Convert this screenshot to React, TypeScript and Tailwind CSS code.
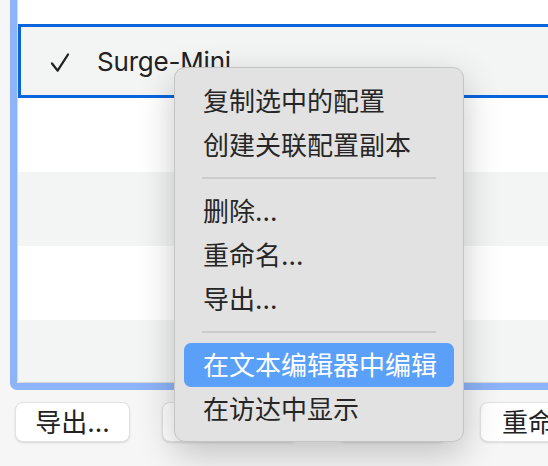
import React from "react";

const font = "font-['Inter','Noto_Sans_CJK_SC',sans-serif]";

type MenuEntry = { label: string; sep?: false; active?: boolean } | { sep: true };

const menu: MenuEntry[] = [
  { label: "复制选中的配置" },
  { label: "创建关联配置副本" },
  { sep: true },
  { label: "删除…" },
  { label: "重命名…" },
  { label: "导出…" },
  { sep: true },
  { label: "在文本编辑器中编辑", active: true },
  { label: "在访达中显示" },
];

const Check = () => (
  <svg width="20" height="21" viewBox="0 0 20 21" className="shrink-0">
    <path d="M2 11.5 L7.6 18.6 L18 2.5" fill="none" stroke="#222" strokeWidth="2.3" strokeLinecap="round" strokeLinejoin="round" />
  </svg>
);

const Row = ({ gray, selected, children }: { gray?: boolean; selected?: boolean; children?: React.ReactNode }) => (
  <div
    className={`h-[74px] shrink-0 flex items-center ${gray ? "bg-[#f3f4f4]" : "bg-white"} ${
      selected ? "border-[3px] border-[#0a64dc]" : ""
    }`}
  >
    {children}
  </div>
);

const Button = ({ label, w, className = "" }: { label: string; w: string; className?: string }) => (
  <div
    className={`${w} h-[40px] shrink-0 rounded-[8px] bg-white border border-[#e2e2e2] shadow-[0_1px_2px_rgba(0,0,0,0.12)] flex items-center justify-center text-[26px] text-[#222] ${className}`}
  >
    {label}
  </div>
);

export default function App() {
  return (
    <div className={`relative w-[548px] h-[466px] overflow-hidden bg-[#f6f6f6] ${font}`}>
      {/* table with focus ring */}
      <div className="ml-[10px] -mt-[10px] w-[600px] h-[400px] border-[7px] border-[#8db3f8] rounded-[7px]">
        <div className="h-full border border-[#d9d9d9] rounded-[2px] overflow-hidden flex flex-col">
          <div className="h-[26px] shrink-0 bg-white" />
          <Row gray selected>
            <div className="ml-[29px] mt-[2px]">
              <Check />
            </div>
            <span className="ml-[27px] text-[26px] text-[#222] tracking-[-0.2px]">Surge-Mini</span>
          </Row>
          <Row />
          <Row gray />
          <Row />
          <Row gray />
        </div>
      </div>

      {/* bottom buttons */}
      <div className="flex mt-[12px] ml-[15px]">
        <Button label="导出…" w="w-[115px]" />
        <Button label="复制…" w="w-[136px]" className="ml-[32px]" />
        <Button label="删除…" w="w-[110px]" className="ml-[39px]" />
        <Button label="重命名…" w="w-[130px]" className="ml-[33px] justify-start pl-[21px]" />
      </div>

      {/* context menu */}
      <div className="absolute left-[174px] top-[67px] w-[290px] h-[375px] rounded-[11px] bg-[#e2e2e2] border border-[#c4c4c4] shadow-[0_12px_36px_rgba(0,0,0,0.22)] pt-[11px]">
        {menu.map((m, i) =>
          m.sep ? (
            <div key={i} className="h-[22px] flex items-center px-[27px]">
              <div className="h-[2px] w-full bg-[#cbcbcb]" />
            </div>
          ) : (
            <div
              key={i}
              className={`h-[44px] mx-[9px] pl-[19px] flex items-center rounded-[7px] text-[26px] ${
                m.active ? "bg-[#5a9ff8] text-white" : "text-[#262626]"
              }`}
            >
              {m.label}
            </div>
          )
        )}
      </div>
    </div>
  );
}
